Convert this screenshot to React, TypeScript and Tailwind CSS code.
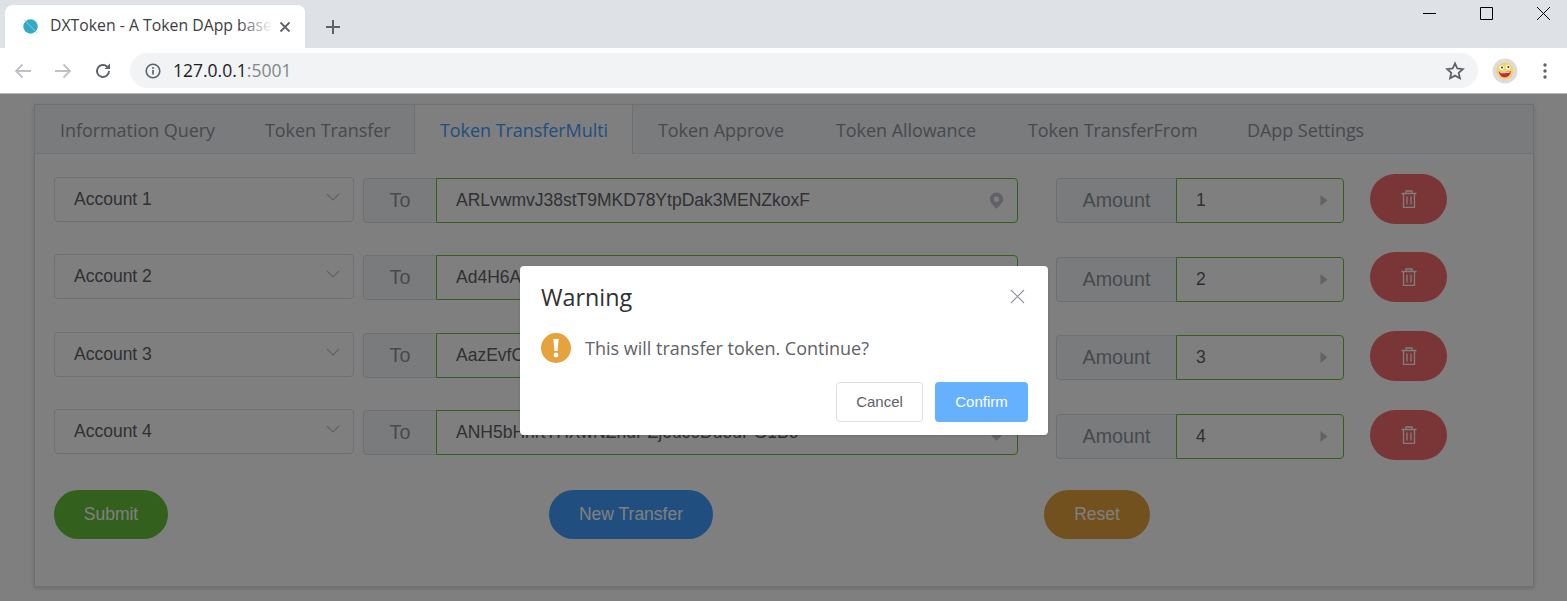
// App.tsx
const tabs = [
  { label: 'Information Query', width: 'w-[205px]' },
  { label: 'Token Transfer', width: 'w-[174px]' },
  { label: 'Token TransferMulti', width: 'w-[219px]' },
  { label: 'Token Approve', width: 'w-[178px]' },
  { label: 'Token Allowance', width: 'w-[192px]' },
  { label: 'Token TransferFrom', width: 'w-[219px]' },
  { label: 'DApp Settings', width: 'w-[170px]' },
];

const recipients = [
  { account: 'Account 1', to: 'ARLvwmvJ38stT9MKD78YtpDak3MENZkoxF', mt: 'mt-[3px]' },
  { account: 'Account 2', to: 'Ad4H6AqTzWmLbnE5sYkR2cVdP7uGxJ9oNf', mt: 'mt-[31px]' },
  { account: 'Account 3', to: 'AazEvfCm8RtK3pLwYq6NsBd2HjU9xTgV4e', mt: 'mt-[32px]' },
  { account: 'Account 4', to: 'ANH5bHhrtTHXwNZhdPZjeuc6DuouPG1Bo', mt: 'mt-[31px]' },
];

const amounts = [
  { value: '1', mt: 'mt-[4px]' },
  { value: '2', mt: 'mt-[34px]' },
  { value: '3', mt: 'mt-[33px]' },
  { value: '4', mt: 'mt-[34px]' },
];

const deleteGaps = ['mt-0', 'mt-[28px]', 'mt-[29px]', 'mt-[29px]'];

const ArrowIcon = ({ flip }: { flip?: boolean }) => (
  <svg width="18" height="16" viewBox="0 0 18 16" fill="none" stroke="#bfc1c4" strokeWidth="1.8" className={flip ? 'rotate-180' : ''}>
    <path d="M17 8H2M8.5 1.5 2 8l6.5 6.5" />
  </svg>
);

const TabStrip = () => (
  <div className="flex h-[48px] shrink-0 items-end bg-[#dee1e6] pl-[5px]">
    <div className="relative flex h-[43px] w-[300px] items-center overflow-hidden rounded-t-[8px] bg-white pl-[18px] pb-[1px]">
      <svg width="15" height="15" viewBox="0 0 15 15" className="shrink-0">
        <circle cx="7.5" cy="7.5" r="7.2" fill="#35a8c6" />
        <path d="M1 0.5 14 14" stroke="#8fd0e0" strokeWidth="0.9" />
      </svg>
      <span className="ml-[12px] whitespace-nowrap font-['Open_Sans',sans-serif] text-[15.8px] text-[#3c4043]">DXToken - A Token DApp based on NEO</span>
      <div className="absolute top-0 right-0 flex h-full w-[66px] items-center justify-end bg-gradient-to-r from-transparent via-white to-white pr-[14px]">
        <svg width="12" height="12" viewBox="0 0 12 12" stroke="#5f6368" strokeWidth="1.8"><path d="M1.5 1.5l9 9M10.5 1.5l-9 9" /></svg>
      </div>
    </div>
    <svg width="16" height="16" viewBox="0 0 16 16" stroke="#5f6368" strokeWidth="2" className="mb-[13px] ml-[20px]"><path d="M8 1v14M1 8h14" /></svg>
    <div className="ml-auto flex h-full items-start text-black">
      <svg width="57" height="28" viewBox="0 0 57 28" stroke="currentColor" strokeWidth="1" fill="none"><path d="M27 13.500h13" /></svg>
      <svg width="57" height="28" viewBox="0 0 57 28" stroke="currentColor" strokeWidth="1" fill="none"><path d="M27.500 7.500h12v12h-12z" /></svg>
      <svg width="57" height="28" viewBox="0 0 57 28" stroke="currentColor" strokeWidth="1" fill="none"><path d="M27 7l13 13M40 7 27 20" /></svg>
    </div>
  </div>
);

const Toolbar = () => (
  <div className="flex h-[46px] shrink-0 items-center border-b border-[#b8b8b8] bg-white pl-[14px]">
    <ArrowIcon />
    <div className="ml-[22px]"><ArrowIcon flip /></div>
    <svg width="18" height="18" viewBox="0 0 18 18" fill="none" className="ml-[22px]">
      <path d="M15 9a6 6 0 1 1-1.8-4.3" stroke="#5f6368" strokeWidth="1.9" />
      <path d="M16 1.5V7h-5.5z" fill="#5f6368" />
    </svg>
    <div className="ml-[18px] flex h-[35px] w-[1348px] items-center rounded-full bg-[#f1f3f4] pl-[15px] pr-[13px]">
      <svg width="16" height="16" viewBox="0 0 16 16" fill="none">
        <circle cx="8" cy="8" r="6.8" stroke="#5f6368" strokeWidth="1.6" />
        <path d="M8 7v4.5" stroke="#5f6368" strokeWidth="1.7" />
        <circle cx="8" cy="4.9" r="1" fill="#5f6368" />
      </svg>
      <span className="ml-[12px] font-['Open_Sans',sans-serif] text-[17.5px] text-[#202124]">127.0.0.1<span className="text-[#80868b]">:5001</span></span>
      <svg width="20" height="20" viewBox="0 0 20 20" fill="none" stroke="#5f6368" strokeWidth="1.8" className="ml-auto">
        <path d="M10 2.4l2.3 5.1 5.500.6-4.100 3.700 1.200 5.500L10 14.600l-4.900 2.700 1.200-5.500-4.100-3.700 5.500-.6z" />
      </svg>
    </div>
    <svg width="26" height="26" viewBox="0 0 26 26" className="ml-[14px]">
      <circle cx="13" cy="13" r="12.5" fill="#dcdcdc" />
      <circle cx="13" cy="13" r="8.5" fill="#f6d365" />
      <circle cx="9.5" cy="9.8" r="2.3" fill="#fff" />
      <circle cx="16" cy="9.3" r="2.3" fill="#fff" />
      <circle cx="10" cy="9.6" r="1" fill="#333" />
      <circle cx="16.4" cy="9" r="1" fill="#333" />
      <path d="M6.8 13.5c2.5 1 8 .8 12-.5-.3 4-2.8 6.3-6 6.3-3.200 0-5.500-2.300-6-5.800z" fill="#c42b3a" />
      <path d="M8 14c2.500.6 6.500.4 10-.6l-.3 1.200c-3 .8-6.500 1-9.300.5z" fill="#fff" />
    </svg>
    <svg width="4" height="16" viewBox="0 0 4 16" fill="#5f6368" className="ml-[25px]">
      <circle cx="2" cy="2" r="1.700" /><circle cx="2" cy="8" r="1.700" /><circle cx="2" cy="14" r="1.700" />
    </svg>
  </div>
);

const TabHeader = () => (
  <div className="flex h-[49px] border-b border-[#e4e7ed] bg-[#f5f7fa] font-['Open_Sans',sans-serif] text-[18px]">
    {tabs.map((tab, i) => (
      <div
        key={tab.label}
        className={`-mb-px flex h-[49px] items-center whitespace-nowrap pt-[2px] tracking-[-0.06px] ${tab.width} ${
          i === 2 ? 'border-x border-[#dcdfe6] bg-white pl-[25px] text-[#409eff]' : 'pl-[25px] text-[#909399]'
        }`}
      >
        {tab.label}
      </div>
    ))}
  </div>
);

const LeftRow = ({ account, to, mt }: { account: string; to: string; mt: string }) => (
  <div className={`flex items-start ${mt}`}>
    <div className="flex h-[45px] w-[300px] items-center justify-between rounded-[4px] border border-[#dcdfe6] bg-white pl-[19px] pr-[13px] text-[#606266]">
      {account}
      <svg width="14" height="8" viewBox="0 0 14 8" fill="none" stroke="#c0c4cc" strokeWidth="1.200" className="mb-[6px]"><path d="M1 1l6 6 6-6" /></svg>
    </div>
    <div className="mt-px ml-[9px] flex h-[45px] w-[73px] items-center justify-center rounded-l-[4px] border border-r-0 border-[#dcdfe6] bg-[#f5f7fa] text-[19.7px] text-[#909399]">To</div>
    <div className="mt-px flex h-[45px] w-[582px] items-center justify-between rounded-r-[4px] border border-[#67c23a] bg-white pl-[19px] pr-[13px] text-[#606266]">
      {to}
      <svg width="15" height="17" viewBox="0 0 14 16">
        <path fillRule="evenodd" d="M7 0.500a6.300 6.300 0 0 1 6.300 6.300C13.300 10.500 7 15.800 7 15.800S.7 10.500.7 6.800A6.300 6.300 0 0 1 7 .5zm0 3.800a2.500 2.500 0 1 0 0 5 2.500 2.500 0 0 0 0-5z" fill="#c0c4cc" />
      </svg>
    </div>
  </div>
);

const AmountRow = ({ value, mt }: { value: string; mt: string }) => (
  <div className={`flex h-[45px] ${mt}`}>
    <div className="flex w-[120px] items-center justify-center rounded-l-[4px] border border-r-0 border-[#dcdfe6] bg-[#f5f7fa] text-[19.7px] text-[#909399]">Amount</div>
    <div className="flex w-[168px] items-center justify-between rounded-r-[4px] border border-[#67c23a] bg-white pl-[19px] pr-[15px] text-[#606266]">
      {value}
      <svg width="8" height="11" viewBox="0 0 8 11" fill="#c0c4cc"><path d="M.5 0l7 5.500-7 5.500z" /></svg>
    </div>
  </div>
);

const DeleteButton = ({ mt }: { mt: string }) => (
  <button className={`flex h-[50px] w-[77px] items-center justify-center rounded-full bg-[#f56c6c] ${mt}`}>
    <svg width="16" height="18" viewBox="0 0 16 18" fill="none" stroke="#fff" strokeWidth="1.300">
      <path d="M0.500 3.500h15M5 3.500V1h6v2.500M2.500 3.500v14h11v-14M6 6.500v8M10 6.500v8" />
    </svg>
  </button>
);

const WarningDialog = () => (
  <div className="flex w-[528px] flex-col rounded-[4px] bg-white pt-[14px] pr-[20px] pb-[13px] pl-[21px] shadow-sm">
    <div className="flex items-start justify-between">
      <span className="font-['Open_Sans',sans-serif] text-[23.3px] leading-[34px] text-[#303133]">Warning</span>
      <svg width="15" height="15" viewBox="0 0 15 15" fill="none" stroke="#909399" strokeWidth="1.100" className="mt-[9px] mr-[3px]"><path d="M1 1l13 13M14 1 1 14" /></svg>
    </div>
    <div className="mt-[19px] flex items-center">
      <svg width="30" height="30" viewBox="0 0 30 30">
        <circle cx="15" cy="15" r="15" fill="#e6a23c" />
        <path d="M12.300 6h5.400l-1.200 12h-3z" fill="#fff" />
        <circle cx="15" cy="22" r="2.400" fill="#fff" />
      </svg>
      <span className="ml-[14px] font-['Open_Sans',sans-serif] text-[18px] text-[#606266]">This will transfer token. Continue?</span>
    </div>
    <div className="mt-[19px] flex justify-end gap-[12px] text-[15px]">
      <button className="h-[40px] w-[87px] rounded-[4px] border border-[#dcdfe6] bg-white text-[#606266]">Cancel</button>
      <button className="h-[40px] w-[93px] rounded-[4px] bg-[#66b1ff] text-white">Confirm</button>
    </div>
  </div>
);

const App = () => (
  <div className="flex h-[601px] w-[1567px] flex-col overflow-hidden bg-white font-['Liberation_Sans',sans-serif] text-[17.5px]">
    <TabStrip />
    <Toolbar />
    <div className="relative flex-1 px-[34px] pt-[10px]">
      <div className="h-[483px] w-[1500px] border border-[#dcdfe6] bg-white shadow-[0_2px_4px_rgba(0,0,0,0.12),0_0_6px_rgba(0,0,0,0.04)]">
        <TabHeader />
        <div className="flex pl-[19px] pt-[20px]">
          <div className="w-[964px]">
            {recipients.map((r) => <LeftRow key={r.account} {...r} />)}
          </div>
          <div className="ml-[38px] w-[288px]">
            {amounts.map((a) => <AmountRow key={a.value} {...a} />)}
          </div>
          <div className="ml-[26px] flex flex-col">
            {deleteGaps.map((mt, i) => <DeleteButton key={i} mt={mt} />)}
          </div>
        </div>
        <div className="mt-[30px] flex pl-[19px] text-white">
          <button className="h-[49px] w-[114px] rounded-full bg-[#67c23a]">Submit</button>
          <button className="ml-[381px] h-[49px] w-[164px] rounded-full bg-[#409eff]">New Transfer</button>
          <button className="ml-[331px] h-[49px] w-[106px] rounded-full bg-[#e6a23c]">Reset</button>
        </div>
      </div>
      {/* dialog backdrop */}
      <div className="absolute inset-0 bg-black/50" />
      <div className="absolute top-[172px] left-[520px]">
        <WarningDialog />
      </div>
    </div>
  </div>
);

export default App;
